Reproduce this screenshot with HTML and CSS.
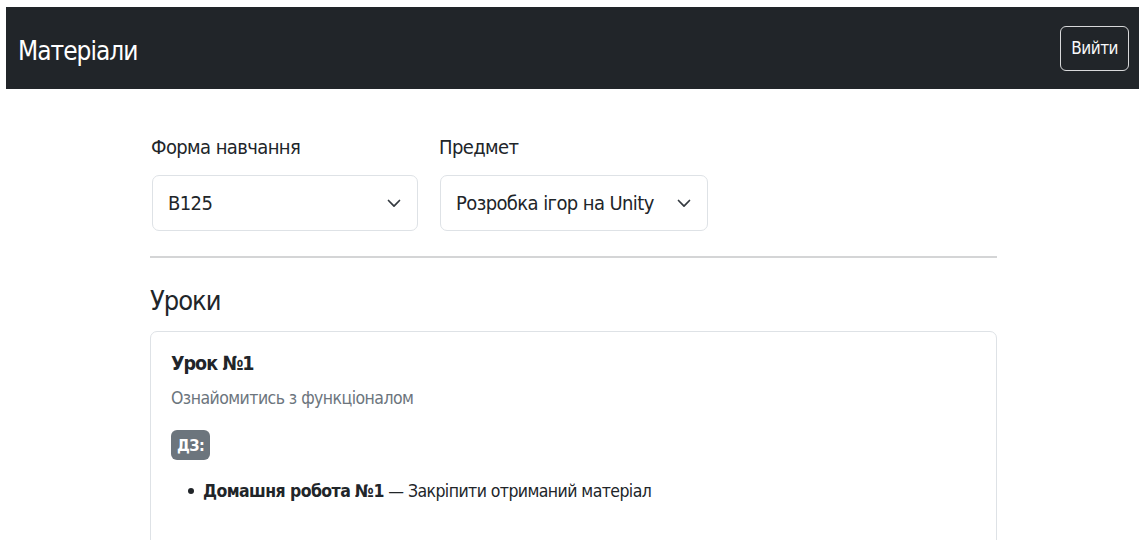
FILE: index.html
```html
<!DOCTYPE html>
<html lang="uk">
<head>
<meta charset="utf-8">
<title>Матеріали</title>
<link rel="stylesheet" href="styles.css">
</head>
<body>
  <nav class="navbar">
    <span class="brand">Матеріали</span>
    <button class="btn-logout" type="button">Вийти</button>
  </nav>

  <main class="container">
    <div class="filters">
      <div class="field">
        <label class="field-label">Форма навчання</label>
        <div class="select select-group">
          <span class="select-value">B125</span>
          <svg class="chevron" viewBox="0 0 14 9" aria-hidden="true"><path d="M1.5 1.5 7 7.2l5.5-5.7"/></svg>
        </div>
      </div>
      <div class="field">
        <label class="field-label">Предмет</label>
        <div class="select">
          <span class="select-value">Розробка ігор на Unity</span>
          <svg class="chevron" viewBox="0 0 14 9" aria-hidden="true"><path d="M1.5 1.5 7 7.2l5.5-5.7"/></svg>
        </div>
      </div>
    </div>

    <hr class="divider">

    <h2 class="section-title">Уроки</h2>

    <article class="card">
      <h3 class="card-title">Урок №1</h3>
      <p class="card-subtitle">Ознайомитись з функціоналом</p>
      <span class="badge">ДЗ:</span>
      <ul class="homework">
        <li><strong>Домашня робота №1</strong> — Закріпити отриманий матеріал</li>
      </ul>
    </article>
  </main>
</body>
</html>
```

FILE: styles.css
```css
* {
  box-sizing: border-box;
}

body {
  margin: 7px 0 0 6px;
  font-family: "DejaVu Sans Condensed", "Noto Sans", sans-serif;
  color: #212529;
  background: #fff;
  overflow: hidden;
}

/* top bar */
.navbar {
  height: 82px;
  background: #212529;
  display: flex;
  align-items: center;
  justify-content: space-between;
  padding: 0 10px 0 12px;
}

.brand {
  color: #fff;
  font-size: 26px;
  letter-spacing: -1px;
  line-height: 30px;
  padding-top: 5px;
}

.btn-logout {
  font-family: inherit;
  height: 45px;
  padding: 0 10px;
  font-size: 17px;
  letter-spacing: -0.5px;
  color: #f8f9fa;
  background: transparent;
  border: 1px solid #d8d9da;
  border-radius: 6px;
}

/* page content */
.container {
  width: 847px;
  margin-left: 144px;
  padding-top: 44px;
}

.filters {
  display: flex;
  gap: 22px;
  padding-left: 2px;
}

.field-label {
  display: block;
  font-size: 20px;
  letter-spacing: -0.6px;
  line-height: 28px;
  margin: 0 0 14px -1px;
}

.select {
  height: 56px;
  display: flex;
  align-items: center;
  gap: 23px;
  padding: 0 16px 0 15px;
  border: 1px solid #dee2e6;
  border-radius: 7px;
  font-size: 20px;
  letter-spacing: -0.6px;
}

.select-group {
  width: 266px;
  justify-content: space-between;
}

.chevron {
  width: 14px;
  height: 9px;
  flex: none;
  fill: none;
  stroke: #343a40;
  stroke-width: 1.7;
  stroke-linecap: round;
  stroke-linejoin: round;
}

.divider {
  margin: 25px 0 0;
  border: 0;
  border-top: 2px solid #d4d5d6;
}

.section-title {
  margin: 25px 0 12px;
  font-size: 27px;
  letter-spacing: -1px;
  line-height: 36px;
  font-weight: 500;
}

.card {
  border: 1px solid #dee2e6;
  border-radius: 7px;
  padding: 19px 20px 40px;
  min-height: 260px;
}

.card-title {
  margin: 0;
  font-size: 19.5px;
  letter-spacing: -1px;
  line-height: 26px;
  font-weight: 700;
}

.card-subtitle {
  margin: 9px 0 20px;
  font-size: 17.5px;
  letter-spacing: -0.55px;
  line-height: 24px;
  color: #6c757d;
}

.badge {
  display: inline-flex;
  align-items: center;
  height: 30px;
  padding: 0 6px;
  border-radius: 6px;
  background: #6c757d;
  color: #fff;
  font-size: 16px;
  letter-spacing: -0.5px;
  font-weight: 700;
}

.homework {
  margin: 18px 0 0;
  padding-left: 17px;
  list-style: none;
  font-size: 17.5px;
  letter-spacing: -0.57px;
  line-height: 26px;
}

/* round bullet in front of each homework item */
.homework li::before {
  content: "";
  display: inline-block;
  width: 6px;
  height: 6px;
  margin-right: 9px;
  border-radius: 50%;
  background: #212529;
  vertical-align: 3px;
}
```
